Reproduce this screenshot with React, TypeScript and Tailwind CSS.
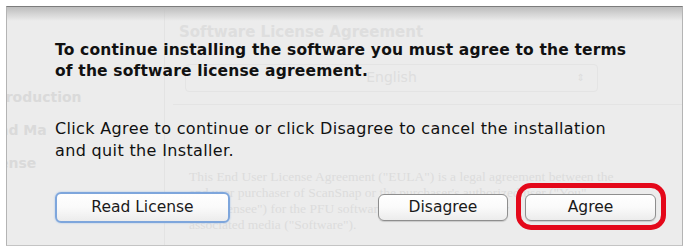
import React from 'react';

const ghostSerif = { fontFamily: '"Liberation Serif", serif' };

function GhostWindow() {
  // faded installer window seen through the sheet
  return (
    <div className="absolute inset-0 flex text-[#dedede] select-none pointer-events-none whitespace-nowrap overflow-hidden">
      {/* sidebar */}
      <div className="w-[166px] shrink-0 border-r border-[#e3e3e3] pt-[74px] -ml-[8px] flex flex-col text-[14px] leading-[33px] font-bold text-[#dadada]">
        <div>troduction</div>
        <div>ad Ma</div>
        <div>ense</div>
      </div>
      {/* main pane */}
      <div className="flex-1 pl-[8px] pt-[14px] flex flex-col">
        <div className="pl-[6px] text-[15px] font-bold">Software License Agreement</div>
        <div className="mt-[20px] ml-[12px] mr-[84px] h-[28px] rounded border border-[#e4e4e4] flex items-center justify-center text-[14px] relative">
          English
          <span className="absolute right-[12px] text-[10px]">⇕</span>
        </div>
        <div className="mt-[12px] h-px bg-[#e4e4e4]" />
        <div className="mt-[64px] pl-[16px] text-[13.5px] leading-[16px] text-[#dcdcdc]" style={ghostSerif}>
          <div>This End User License Agreement ("EULA") is a legal agreement between the</div>
          <div>end user purchaser of ScanSnap or the purchaser's authorized user ("You"</div>
          <div>or "Licensee") for the PFU software product, including any</div>
          <div>associated media ("Software").</div>
        </div>
      </div>
    </div>
  );
}

function MacButton({ label, focused, className }: { label: string; focused?: boolean; className?: string }) {
  return (
    <div
      className={
        'flex items-center justify-center rounded-[6px] bg-gradient-to-b from-white via-[#fafafa] to-[#ececec] text-[15.5px] text-[#1a1a1a] ' +
        (focused
          ? 'border-2 border-[#7ea6dc] shadow-[0_0_2px_#9cbfe9] '
          : 'border border-[#8e8e8e] shadow-[0_1px_1px_rgba(0,0,0,0.15)] ') +
        (className ?? '')
      }
    >
      {label}
    </div>
  );
}

export default function App() {
  return (
    <div
      className="w-[687px] h-[248px] bg-white overflow-hidden pt-[6px] pl-[6px]"
      style={{ fontFamily: '"DejaVu Sans", "Noto Sans", sans-serif' }}
    >
      <div className="relative w-[677px] h-[240px] bg-[#ececec] border-t border-t-[#7c7c7c] border-x border-x-[#b4b4b4] border-b border-b-[#c4c4c4]">
        <GhostWindow />
        <div className="absolute inset-x-0 top-0 h-[14px] bg-gradient-to-b from-[#bdbdbd] to-[#ececec]/0" />

        <div className="relative pl-[48px] pt-[33px]">
          <p className="text-[15.5px] font-bold leading-[21px] tracking-[0.17px] text-[#111]">
            To continue installing the software you must agree to the terms
            <br />
            of the software license agreement.
          </p>
          <p className="mt-[36px] text-[16px] leading-[22px] tracking-[0.35px] text-[#111]">
            Click Agree to continue or click Disagree to cancel the installation
            <br />
            and quit the Installer.
          </p>

          <div className="mt-[30px] flex items-center">
            <MacButton label="Read License" focused className="w-[175px] h-[31px]" />
            <MacButton label="Disagree" className="ml-[148px] w-[130px] h-[27px]" />
            <div className="relative ml-[17px]">
              <MacButton label="Agree" className="w-[131px] h-[27px]" />
              <div className="absolute -left-[9px] -top-[11px] w-[150px] h-[47px] rounded-[15px] border-[5px] border-[#e4081a]" />
            </div>
          </div>
        </div>
      </div>
    </div>
  );
}
